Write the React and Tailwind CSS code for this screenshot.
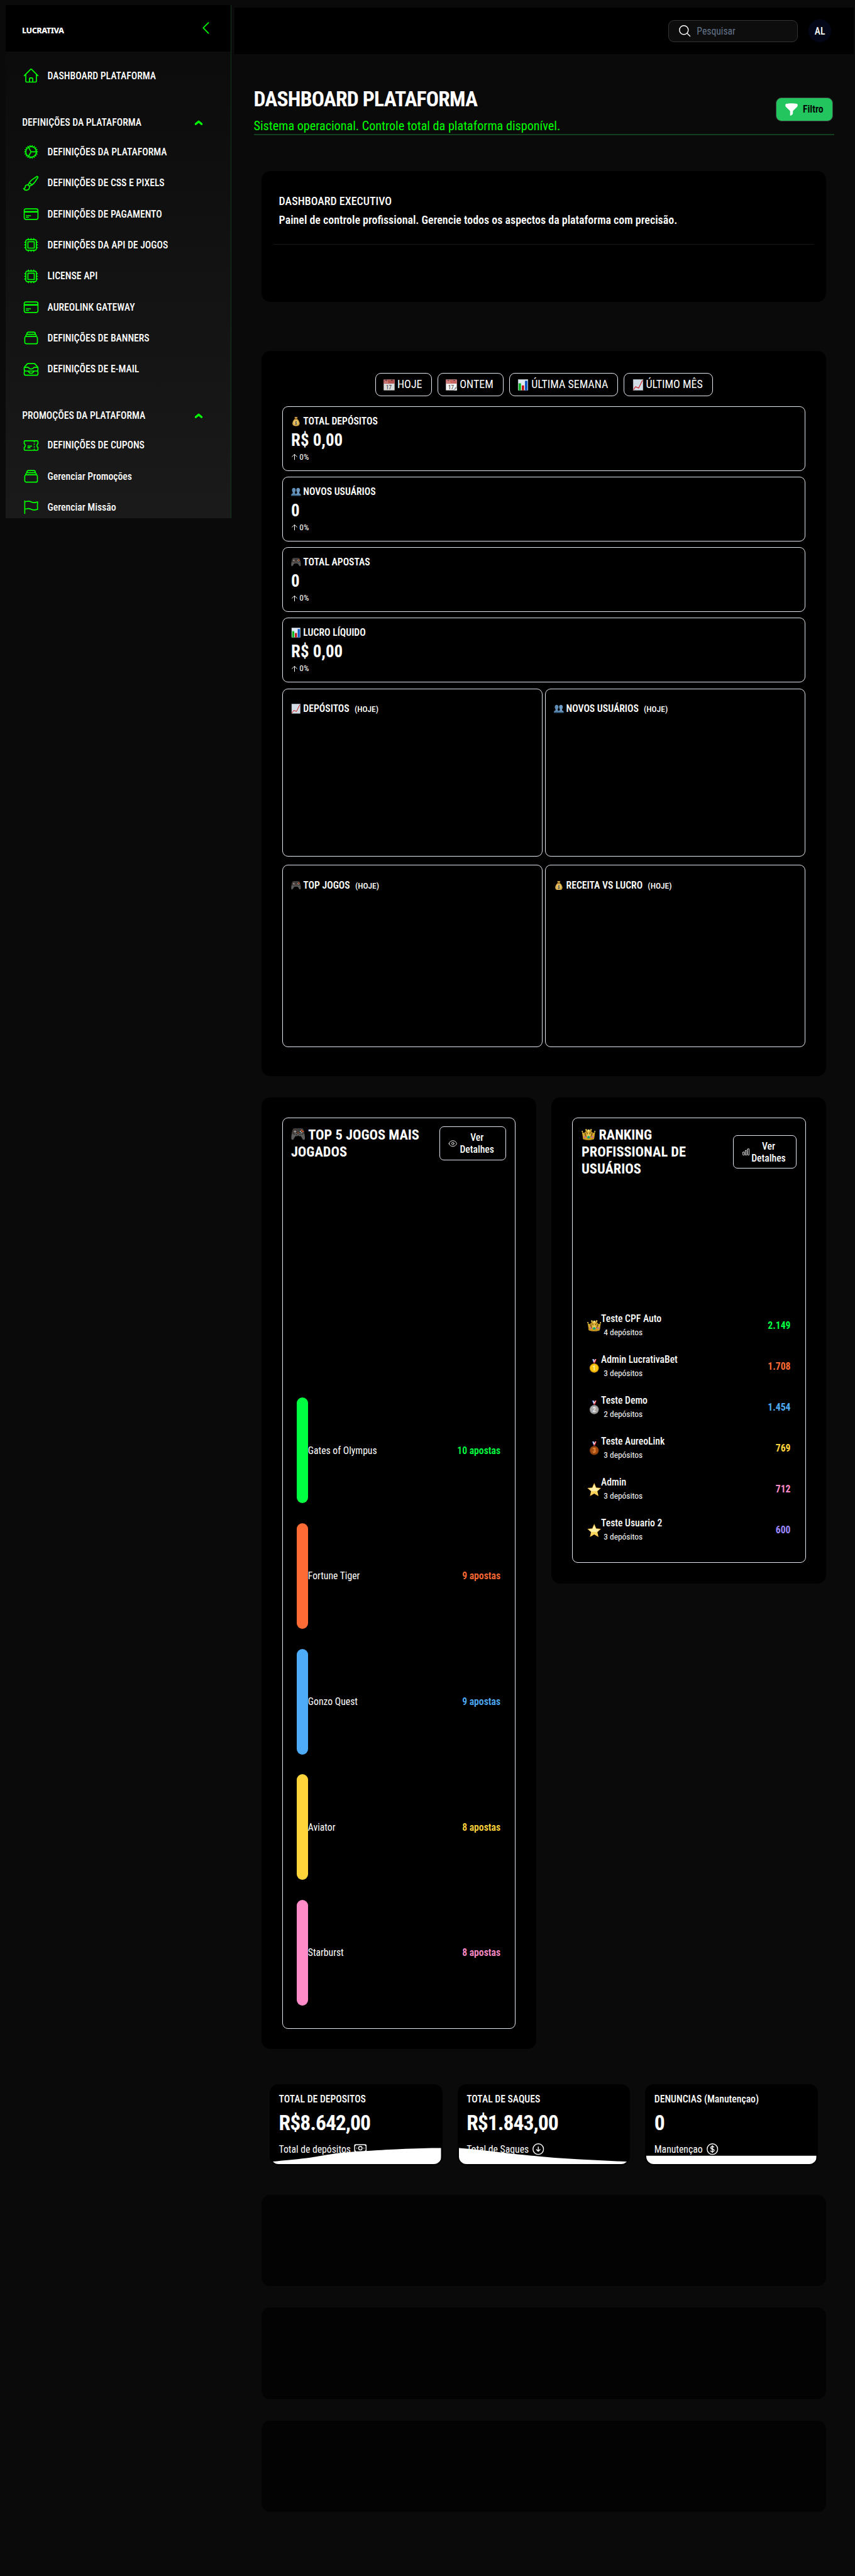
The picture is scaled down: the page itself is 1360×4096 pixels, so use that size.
import React from 'react'
import {
  HiOutlineHome, HiOutlineCog, HiOutlinePaintBrush, HiOutlineCreditCard, HiOutlineCpuChip,
  HiOutlineRectangleStack, HiOutlineInboxStack, HiOutlineTicket, HiOutlineFlag, HiOutlineChevronLeft,
  HiOutlineMagnifyingGlass, HiFunnel, HiOutlineEye, HiOutlineChartBar, HiOutlineBanknotes,
  HiOutlineArrowDownCircle, HiOutlineCurrencyDollar,
} from 'react-icons/hi2'

/* ---------- pictograms ---------- */

function Calendar({ tear }) {
  return (
    <>
      <rect x="0.5" y="1" width="31" height="30.5" fill={tear ? '#f4f4f4' : '#dcdcdc'} />
      <rect x="0.5" y="1" width="31" height="11.5" fill={tear ? '#c66563' : '#b25553'} />
      <circle cx="7.5" cy="3" r="1.6" fill="#1a1a1a" />
      <circle cx="24" cy="3" r="1.6" fill="#1a1a1a" />
      {tear && <path d="M7 0v3M24 0v3" stroke="#bbb" strokeWidth="1" />}
      <text x="1.8" y="11" fontSize="8" fill="#e3b3b0" fontFamily="Roboto">JUL</text>
      <text x="6.5" y="27.8" fontSize="17" fill="#333" fontFamily="Roboto">17</text>
      {tear && <path d="M31.5 20v11.5H17c6-1 9-4 9.500-8 2 0 4-1.500 5-3.500z" fill="#8f8f8f" />}
      {tear && <path d="M31.500 24v7.500H21c5-1 8-4 10.500-7.500z" fill="#fafafa" />}
    </>
  )
}

const art = {
  hoje: <Calendar />,
  ontem: <Calendar tear />,
  bars: (
    <>
      <rect x="2" y="0.5" width="28" height="31" fill="#dfe9f3" stroke="#aab4bd" strokeWidth="0.8" />
      <rect x="3.500" y="11.500" width="6.800" height="20" fill="#0db522" />
      <rect x="12.600" y="17.500" width="6.300" height="14" fill="#c40d10" />
      <rect x="21.500" y="4.500" width="6.800" height="27" fill="#0b56c4" />
    </>
  ),
  line: (
    <>
      <rect x="2" y="0.5" width="28" height="31" fill="#d3dde6" stroke="#aab4bd" strokeWidth="0.8" />
      <path d="M3 30L8.500 21.500l9 3.500L28.500 3" fill="none" stroke="#d01217" strokeWidth="2" />
    </>
  ),
  bag: (
    <>
      <path d="M11 1.500c2 .8 3.500.8 5 0 1.500.8 3.300.8 5 0l-1.500 6.300h-7z" fill="#c79a3f" />
      <path d="M12 8.500h8c4.500 4 7.500 9 7.500 14.500 0 6-4 8.500-11.500 8.500S4.500 29 4.500 23c0-5.500 3-10.500 7.500-14.500z" fill="#d9ad4c" />
      <path d="M24.500 16c3 6 3.500 14-8.500 15.500 8.500 0 11.500-2.500 11.500-8.500 0-2.500-1-5-3-7z" fill="#a8781f" />
      <rect x="11" y="7" width="10" height="2.200" rx="1.100" fill="#8b5e1a" />
      <circle cx="16" cy="20.500" r="7" fill="#edcb6c" />
      <text x="16" y="25.500" textAnchor="middle" fontSize="14" fontWeight="700" fill="#2b3550" fontFamily="Roboto">$</text>
    </>
  ),
  users: (
    <>
      <path d="M9 3.500c4 0 6 3 6 6.800 0 3-1 5.200-2.500 7 0 4 .5 4.700 3.500 5.700v6H.5v-3.500c0-2 1-2.500 3-3.200 2-.7 2-2 2-4.500C4 16 3 13.500 3 10.300 3 6.500 5 3.500 9 3.500z" fill="#5f8db5" />
      <path d="M23 3.500c-4 0-6 3-6 6.800 0 3 1 5.200 2.500 7 0 4-.5 4.700-3.500 5.700v6h15.500v-3.500c0-2-1-2.500-3-3.200-2-.7-2-2-2-4.500 1.500-1.800 2.500-4.300 2.500-7.500 0-3.800-2-6.800-6-6.800z" fill="#6c9ac2" />
      <path d="M.5 26h31v3H.5z" fill="#3f6a92" />
    </>
  ),
  pad: (
    <>
      <path d="M6 3.500C9 2.500 23 2.500 26 3.500c3 1 5 13 5.500 21 .2 5-3.500 6-5.500 2.500L22 20.500H10L6 27C4 30.500.3 29.500.5 24.500 1 16.500 3 4.500 6 3.500z" fill="#5d5e5b" />
      <path d="M6 3.500C9 2.500 23 2.500 26 3.500c2 1 3.500 6 4.300 11.500L21 20H11L1.700 15C2.500 9.500 4 4.500 6 3.500z" fill="#3a3b3a" />
      <circle cx="9" cy="10.500" r="4.600" fill="#2a2a2a" stroke="#7a4a35" strokeWidth="0.8" />
      <path d="M9 7.500v6M6 10.500h6" stroke="#a5a8a8" strokeWidth="1.900" />
      <circle cx="24" cy="7.500" r="1.600" fill="#ff5a1a" />
      <circle cx="26.700" cy="10.200" r="1.600" fill="#ff5a1a" />
      <circle cx="21.300" cy="10.200" r="1.500" fill="#a9b0b0" />
      <circle cx="24" cy="13" r="1.500" fill="#a9b0b0" />
      <circle cx="11.700" cy="17.500" r="2.500" fill="#232323" stroke="#a0a3a3" strokeWidth="1" />
      <circle cx="20.300" cy="17.500" r="2.500" fill="#232323" stroke="#a0a3a3" strokeWidth="1" />
      <rect x="15.200" y="12" width="1.700" height="3" fill="#b3431b" />
    </>
  ),
  crown: (
    <>
      <path d="M3.500 27L1 10.500C3 13 6 15.500 9.500 9.500L12 7l4 3 4-3 2.500 2.500C26 15.500 29 13 31 10.500L28.500 27c-5 3-20 3-25 0z" fill="#d8ab30" />
      <path d="M5.500 14.500c3 0 4.500-2.500 5-6 1.500 5 3.500 6.500 5.500 3 2 3.500 4 2 5.500-3 .5 3.500 2 6 5 6-2 3-3 5-3.500 8h-14c-.5-3-1.500-5-3.500-8z" fill="#8f6712" />
      <path d="M9 10l3 13h8l3-13-4.500 8L16 9l-2.500 9z" fill="#ecc752" />
      <path d="M2.800 21.500c7 3.500 19.400 3.500 26.400 0L28.500 27c-5 3-20 3-25 0z" fill="#c9981f" />
      <circle cx="10.500" cy="6.500" r="1.900" fill="#f3cf58" />
      <circle cx="21.500" cy="6.500" r="1.900" fill="#f3cf58" />
      <circle cx="16" cy="8" r="2.600" fill="#fbe77f" />
      <circle cx="1.700" cy="10" r="1.500" fill="#f3cf58" />
      <circle cx="30.300" cy="10" r="1.500" fill="#f3cf58" />
      <ellipse cx="16" cy="23.300" rx="3.200" ry="2.800" fill="#16a37b" />
      <circle cx="7.500" cy="22.500" r="1.900" fill="#c355c9" />
      <circle cx="24.500" cy="22.500" r="1.900" fill="#c355c9" />
    </>
  ),
  star: (
    <>
      <path d="M16 1.500l4.600 10.400 11 1-8.300 7.400 2.500 11L16 25.600 6.200 31.300l2.500-11L.4 12.900l11-1z" fill="#f6b83a" />
      <path d="M16 4l3.800 9 9.300.8-7 6.200 2 9L16 24.200 7.900 29l2-9-7-6.200 9.300-.8z" fill="#fff0a8" />
      <path d="M9.900 20L22.100 20l2 9L16 24.200 7.900 29z" fill="#fbd45c" />
    </>
  ),
}

function Medal({ n, face, edge, ink }) {
  return (
    <>
      <path d="M10.500 0h5l3 9h-4z" fill="#2443a8" />
      <path d="M21.500 0h-4l-3.500 9h4z" fill="#d8202a" />
      <path d="M12.500 0h2l3 9h-2zM19.500 0h-1.500l-3.500 9h2z" fill="#fff" />
      <circle cx="16" cy="20.500" r="10.500" fill={edge} />
      <circle cx="16" cy="20.200" r="8.700" fill={face} />
      <text x="16" y="25.800" textAnchor="middle" fontSize="15" fontWeight="700" fill={ink} fontFamily="Roboto">{n}</text>
    </>
  )
}
art.gold = <Medal n="1" face="#fcc40e" edge="#d99a06" ink="#fff2b0" />
art.silver = <Medal n="2" face="#a8a8a8" edge="#8a8a8a" ink="#ececec" />
art.bronze = <Medal n="3" face="#a04a10" edge="#7d360b" ink="#ef8f3c" />

const Emoji = ({ k, className = '' }) => (
  <svg viewBox="0 0 32 32" aria-hidden="true" className={'inline-block h-[1em] w-[1em] shrink-0 ' + className}>{art[k]}</svg>
)

/* ---------- sidebar ---------- */

const platform = [
  [HiOutlineCog, 'DEFINIÇÕES DA PLATAFORMA'],
  [HiOutlinePaintBrush, 'DEFINIÇÕES DE CSS E PIXELS'],
  [HiOutlineCreditCard, 'DEFINIÇÕES DE PAGAMENTO'],
  [HiOutlineCpuChip, 'DEFINIÇÕES DA API DE JOGOS'],
  [HiOutlineCpuChip, 'LICENSE API'],
  [HiOutlineCreditCard, 'AUREOLINK GATEWAY'],
  [HiOutlineRectangleStack, 'DEFINIÇÕES DE BANNERS'],
  [HiOutlineInboxStack, 'DEFINIÇÕES DE E-MAIL'],
]
const promos = [
  [HiOutlineTicket, 'DEFINIÇÕES DE CUPONS'],
  [HiOutlineRectangleStack, 'Gerenciar Promoções'],
  [HiOutlineFlag, 'Gerenciar Missão'],
]

const Item = ({ icon: Icon, children }) => (
  <div className="flex h-[49.33px] shrink-0 items-center gap-[12.9px] pl-[26.8px] text-[15.7px] font-medium text-white">
    <Icon className="h-[26.9px] w-[26.9px] shrink-0 text-[#00ff00]" />
    <span className="whitespace-nowrap">{children}</span>
  </div>
)

const Group = ({ children }) => (
  <div className="mt-[26.6px] flex h-[45.2px] shrink-0 items-center justify-between pr-[43.6px] pl-[26.2px] text-[15.7px] font-medium text-white">
    <span>{children}</span>
    <svg viewBox="0 0 14 10" className="h-[10px] w-[14px]" fill="none" stroke="#00ff00" strokeWidth="3.200" strokeLinecap="round" strokeLinejoin="round">
      <path d="M2.300 7.300L7 3.200l4.700 4.100" />
    </svg>
  </div>
)

function Sidebar() {
  return (
    <aside className="mt-2 ml-[9px] flex h-[816px] w-[359px] shrink-0 flex-col overflow-hidden border-r border-[#14351f] bg-linear-to-b from-[#0a0a0a] to-[#1a1a1a]">
      <div className="flex h-[74px] shrink-0 items-start justify-between bg-black pr-[26.5px] pl-[26px]">
        <span className="mt-[32.4px] font-['Noto_Sans'] text-[12.7px] leading-[16px] font-extrabold tracking-[-0.04em] text-white [font-stretch:normal]">LUCRATIVA</span>
        <HiOutlineChevronLeft className="mt-[23.4px] h-[26.9px] w-[26.9px] text-[#00ff00]" />
      </div>
      <div className="h-[14px] shrink-0" />
      <Item icon={HiOutlineHome}>DASHBOARD PLATAFORMA</Item>
      <Group>DEFINIÇÕES DA PLATAFORMA</Group>
      {platform.map(([i, t]) => <Item key={t} icon={i}>{t}</Item>)}
      <Group>PROMOÇÕES DA PLATAFORMA</Group>
      {promos.map(([i, t]) => <Item key={t} icon={i}>{t}</Item>)}
    </aside>
  )
}

/* ---------- main area ---------- */

function TopBar() {
  return (
    <header className="ml-[4.5px] flex h-[74px] w-[985px] items-center justify-end bg-black pr-[35.3px]">
      <div className="flex h-[35px] w-[206.3px] items-center rounded-[9px] border border-[#333] bg-[#0d0d0d] pl-[14.200px]">
        <HiOutlineMagnifyingGlass className="h-[22.400px] w-[22.400px] text-white" />
        <span className="ml-[8px] text-[15.7px] text-[#64748b]">Pesquisar</span>
      </div>
      <div className="ml-[17.200px] flex h-9 w-9 items-center justify-center rounded-full bg-[#020617] text-[15.7px] font-medium text-white">AL</div>
    </header>
  )
}

function PageTitle() {
  return (
    <div className="mt-[52.1px] ml-[35.5px] flex h-[76.3px] w-[923px] items-start justify-between border-b-[2px] border-[#12401f] pr-[1.3px]">
      <div className="flex flex-col">
        <h1 className="text-[33.64px] leading-[40px] font-bold tracking-[-0.025em] text-white">DASHBOARD PLATAFORMA</h1>
        <p className="mt-[9.3px] text-[20.18px] leading-[24px] text-[#00ff00]">Sistema operacional. Controle total da plataforma disponível.</p>
      </div>
      <button className="mt-[16.3px] flex h-[38px] w-[91.5px] items-center rounded-[9px] border border-[#3c3c3c] bg-[#22c55e] pl-[12.500px]">
        <HiFunnel className="h-6 w-6 text-white" />
        <span className="ml-[5.800px] text-[15.7px] font-semibold text-black">Filtro</span>
      </button>
    </div>
  )
}

const Panel = ({ className, children }) => (
  <section className={'rounded-[14px] bg-black ' + className}>{children}</section>
)

const kpis = [
  ['bag', 'TOTAL DEPÓSITOS', 'R$ 0,00'],
  ['users', 'NOVOS USUÁRIOS', '0'],
  ['pad', 'TOTAL APOSTAS', '0'],
  ['bars', 'LUCRO LÍQUIDO', 'R$ 0,00'],
]

const Range = ({ k, className, children }) => (
  <button className={'flex h-[36.8px] items-center gap-[0.22em] rounded-[9px] border border-[#e2e8f0] pl-[12.600px] text-[17.94px] whitespace-nowrap text-white ' + className}>
    <Emoji k={k} />
    <span>{children}</span>
  </button>
)

const Chart = ({ k, className, children }) => (
  <div className={'w-[414.500px] rounded-[9px] border border-[#e2e8f0] pt-[22.3px] pl-[13.400px] ' + className}>
    <div className="flex h-[18px] items-center text-[15.7px] leading-[18px] font-semibold text-white">
      <Emoji k={k} />
      <span className="ml-[3.600px]">{children}</span>
      <span className="mt-[2px] ml-[8.200px] text-[13.45px] font-medium">(HOJE)</span>
    </div>
  </div>
)

function Analytics() {
  return (
    <Panel className="mt-[78.5px] ml-[47.8px] h-[1152.4px] w-[898.5px] pt-[34.8px]">
      <div className="flex justify-center gap-[9.1px]">
        <Range k="hoje" className="w-[90.2px]">HOJE</Range>
        <Range k="ontem" className="w-[104.9px]">ONTEM</Range>
        <Range k="bars" className="w-[173.2px]">ÚLTIMA SEMANA</Range>
        <Range k="line" className="w-[141.5px]">ÚLTIMO MÊS</Range>
      </div>
      <div className="mx-[32.9px] mt-4 flex flex-col gap-[9.1px]">
        {kpis.map(([k, label, value]) => (
          <div key={label} className="flex h-[103px] flex-col rounded-[9px] border border-[#e2e8f0] pt-[13.9px] pl-[13.4px] text-white">
            <div className="flex items-center gap-[3.600px] text-[15.7px] leading-[18px] font-semibold">
              <Emoji k={k} />
              <span>{label}</span>
            </div>
            <div className="mt-[4.9px] text-[26.9px] leading-[32px] font-bold">{value}</div>
            <div className="mt-[3.1px] flex items-center text-[13.45px] leading-[16px]">
              <svg viewBox="0 0 11 11" className="mr-[2.200px] h-[11px] w-[11px]" fill="none" stroke="white" strokeWidth="1">
                <path d="M5.500 10.200V1.600M1.300 5.500l4.200-4.200 4.200 4.200" />
              </svg>
              <span>0%</span>
            </div>
          </div>
        ))}
      </div>
      <div className="mx-[32.9px] mt-[9.6px] flex justify-between">
        <Chart k="line" className="h-[266.8px]">DEPÓSITOS</Chart>
        <Chart k="users" className="h-[266.8px]">NOVOS USUÁRIOS</Chart>
      </div>
      <div className="mx-[32.9px] mt-[13.7px] flex justify-between">
        <Chart k="pad" className="h-[289.6px]">TOP JOGOS</Chart>
        <Chart k="bag" className="h-[289.6px]">RECEITA VS LUCRO</Chart>
      </div>
    </Panel>
  )
}

const games = [
  ['Gates of Olympus', '10 apostas', 'bg-[#00ff41]', 'text-[#00ff41]'],
  ['Fortune Tiger', '9 apostas', 'bg-[#ff6b35]', 'text-[#ff6b35]'],
  ['Gonzo Quest', '9 apostas', 'bg-[#4dabf7]', 'text-[#4dabf7]'],
  ['Aviator', '8 apostas', 'bg-[#ffd43b]', 'text-[#ffd43b]'],
  ['Starburst', '8 apostas', 'bg-[#ff8cc8]', 'text-[#ff8cc8]'],
]

function TopGames() {
  return (
    <Panel className="h-[1513.3px] w-[436.800px] px-[32.900px] pt-[32.5px]">
      <div className="flex h-[1448.5px] flex-col rounded-[9px] border border-[#e2e8f0]">
        <div className="flex h-[80px] items-center justify-between pr-[13.500px] pl-[13.200px]">
          <h2 className="text-[22.4px] leading-[27px] font-bold text-white">
            <Emoji k="pad" className="mr-[0.22em] -translate-y-px align-[-0.15em]" />
            TOP 5 JOGOS MAIS<br />JOGADOS
          </h2>
          <button className="flex h-[53.4px] w-[106.300px] items-center rounded-[7px] border border-[#e2e8f0] pl-[13.500px] text-center text-[15.7px] leading-[19px] font-medium text-white">
            <HiOutlineEye className="h-[14.600px] w-[14.600px]" />
            <span className="ml-[3.400px]">Ver<br />Detalhes</span>
          </button>
        </div>
        <div className="mt-[348.400px] flex flex-col">
          {games.map(([name, bets, bar, ink]) => (
            <div key={name} className="flex h-[199.7px] items-center pr-[22.600px] pl-[22.100px] text-[15.7px]">
              <div className={'h-[168.200px] w-[18px] rounded-[9px] ' + bar} />
              <span className="flex-1 text-white">{name}</span>
              <span className={'font-semibold ' + ink}>{bets}</span>
            </div>
          ))}
        </div>
      </div>
    </Panel>
  )
}

const ranking = [
  ['crown', 'Teste CPF Auto', '4 depósitos', '2.149', 'text-[#00ff41]'],
  ['gold', 'Admin LucrativaBet', '3 depósitos', '1.708', 'text-[#ff6b35]'],
  ['silver', 'Teste Demo', '2 depósitos', '1.454', 'text-[#4dabf7]'],
  ['bronze', 'Teste AureoLink', '3 depósitos', '769', 'text-[#ffd43b]'],
  ['star', 'Admin', '3 depósitos', '712', 'text-[#ff8cc8]'],
  ['star', 'Teste Usuario 2', '3 depósitos', '600', 'text-[#9c88ff]'],
]

function Ranking() {
  return (
    <Panel className="ml-[24.900px] h-[773.9px] w-[436.600px] px-[32.400px] pt-[32.5px]">
      <div className="flex h-[708.4px] flex-col rounded-[9px] border border-[#e2e8f0]">
        <div className="flex h-[107px] items-center justify-between pr-[13.400px] pl-[14.200px]">
          <h2 className="text-[22.4px] leading-[27px] font-bold text-white">
            <Emoji k="crown" className="mr-[0.22em] -translate-y-px align-[-0.15em]" />
            RANKING<br />PROFISSIONAL DE<br />USUÁRIOS
          </h2>
          <button className="flex h-[53.400px] w-[101.600px] items-center rounded-[7px] border border-[#e2e8f0] pl-[13.500px] text-center text-[15.7px] leading-[19px] font-medium text-white">
            <HiOutlineChartBar className="h-[13.400px] w-[13.400px]" />
            <span className="ml-[1.600px]">Ver<br />Detalhes</span>
          </button>
        </div>
        <div className="mt-[190.100px] flex flex-col">
          {ranking.map(([k, name, sub, value, ink]) => (
            <div key={name} className="flex h-[65.03px] items-center pr-[23.200px] pl-[22.800px]">
              <Emoji k={k} className="text-[22.400px]" />
              <div className="mt-[0.900px] flex flex-1 flex-col text-white">
                <span className="text-[15.7px] leading-[21.700px] font-medium">{name}</span>
                <span className="pl-[4.200px] text-[13.45px] leading-[21.700px]">{sub}</span>
              </div>
              <span className={'text-[15.7px] font-bold ' + ink}>{value}</span>
            </div>
          ))}
        </div>
      </div>
    </Panel>
  )
}

const Total = ({ label, value, note, icon: Icon, wave }) => (
  <div className="relative h-[128.400px] w-[274.500px] overflow-hidden rounded-[14px] border-2 border-black bg-black pt-[12.500px] pl-[12.400px] text-white">
    <div className="text-[15.7px] leading-[18px] font-medium">{label}</div>
    <div className="mt-[10.100px] text-[33.64px] leading-[38px] font-bold tracking-[-0.03em]">{value}</div>
    <div className="mt-[10.500px] flex h-[24px] items-center gap-[4.300px] text-[15.7px]">
      <span>{note}</span>
      <Icon className="h-[22.400px] w-[22.400px]" />
    </div>
    <svg viewBox="0 0 270 26" preserveAspectRatio="none" className="absolute right-0 bottom-0 left-0 h-[26px] w-full" fill="white">
      <path d={wave} />
    </svg>
  </div>
)

function Totals() {
  return (
    <div className="mt-[56.400px] ml-[61.200px] flex w-[871.700px] justify-between">
      <Total label="TOTAL DE DEPOSITOS" value="R$8.642,00" note="Total de depósitos" icon={HiOutlineBanknotes}
        wave="M0 22.200C25 19.800 45 18 64 15.400 84 12.500 95 9.800 112 8c18-1.600 28-2.200 43-3C175 3.600 190 2.900 204 2.300 230 1 250 .5 270 .5V26H0z" />
      <Total label="TOTAL DE SAQUES" value="R$1.843,00" note="Total de Saques" icon={HiOutlineArrowDownCircle}
        wave="M0 .5C25 2.500 45 5 70 7.800 92 10.600 108 12 127 13.700 150 16 170 17.200 192 18.400 220 20 245 21 270 22.200V26H0z" />
      <Total label="DENUNCIAS (Manutençao)" value="0" note="Manutençao" icon={HiOutlineCurrencyDollar}
        wave="M0 12.800H270V26H0z" />
    </div>
  )
}

export default function App() {
  return (
    <div className="flex h-[4096px] w-[1360px] items-start overflow-hidden bg-[#0a0a0a] font-[Roboto,sans-serif] [font-stretch:condensed]">
      <Sidebar />
      <main className="flex w-[992px] shrink-0 flex-col pt-[12.3px]">
        <TopBar />
        <PageTitle />
        <Panel className="mt-[57.2px] ml-[47.8px] h-[208px] w-[898.5px] pt-[35.7px] text-[17.94px] leading-[24px] text-white">
          <div className="pl-[27.800px] font-medium">DASHBOARD EXECUTIVO</div>
          <div className="mt-[6.9px] pl-[27.800px] font-semibold">Painel de controle profissional. Gerencie todos os aspectos da plataforma com precisão.</div>
          <div className="mx-[19.300px] mt-[25.500px] border-t border-[#161616]" />
        </Panel>
        <Analytics />
        <div className="mt-[33.8px] ml-[47.8px] flex items-start">
          <TopGames />
          <Ranking />
        </div>
        <Totals />
        <div className="mt-[47.200px] ml-[47.8px] flex flex-col gap-[34px]">
          <div className="h-[145.400px] w-[898.5px] rounded-[14px] bg-[#030303]" />
          <div className="h-[145.400px] w-[898.5px] rounded-[14px] bg-[#030303]" />
          <div className="h-[145.400px] w-[898.5px] rounded-[14px] bg-[#030303]" />
        </div>
      </main>
    </div>
  )
}
